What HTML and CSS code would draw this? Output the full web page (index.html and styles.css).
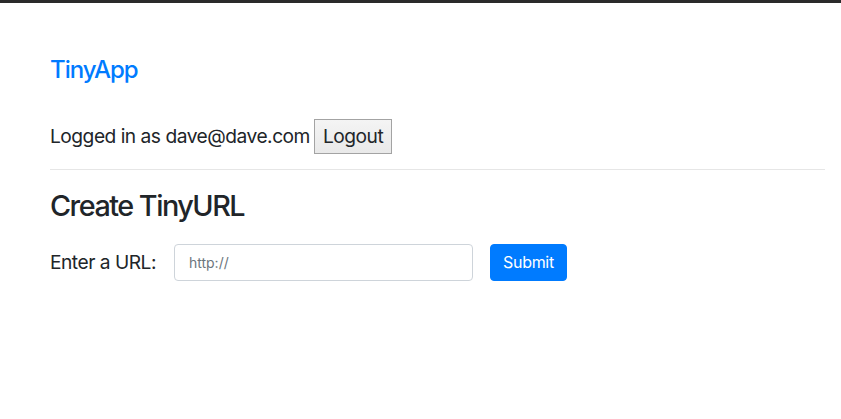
FILE: index.html
```html
<!DOCTYPE html>
<html lang="en">
<head>
<meta charset="utf-8">
<title>TinyApp</title>
<link rel="stylesheet" href="styles.css">
</head>
<body>
<div class="topbar"></div>
<div class="page">
  <nav class="nav">
    <a class="brand" href="#">TinyApp</a>
  </nav>
  <div class="login">
    <span class="login-text">Logged in as dave@dave.com</span>
    <button class="logout" type="button">Logout</button>
  </div>
  <hr class="rule">
  <main class="content">
    <h4 class="title">Create TinyURL</h4>
    <form class="url-form">
      <label class="url-label" for="longURL">Enter a URL:</label>
      <input class="url-input" id="longURL" type="text" placeholder="http://">
      <button class="submit" type="button">Submit</button>
    </form>
  </main>
</div>
</body>
</html>
```

FILE: styles.css
```css
html, body {
  margin: 0;
  padding: 0;
  background: #ffffff;
}

body {
  font-family: Inter, "Liberation Sans", Arial, sans-serif;
  font-size: 19.2px;
  line-height: 1.5;
  letter-spacing: -0.5px;
  color: #212529;
}

.topbar {
  height: 3px;
  background: #2a2a2a;
}

.page {
  padding: 0 16px 0 50px;
}

.nav {
  display: flex;
  padding-top: 49px;
  height: 36px;
}

.brand {
  font-size: 24px;
  line-height: 36px;
  font-weight: 500;
  letter-spacing: -1px;
  color: #007bff;
  text-decoration: none;
}

.login {
  display: flex;
  align-items: center;
  gap: 4px;
  margin-top: 31px;
  height: 35px;
}

.logout {
  font-family: inherit;
  font-size: 19.2px;
  line-height: 28.8px;
  letter-spacing: -0.5px;
  color: #212529;
  background: linear-gradient(#f4f4f4, #e9e9e9);
  border: 1px solid #a3a3a3;
  border-radius: 0;
  padding: 2px 8px;
  margin: 0;
}

.rule {
  margin: 15px 0 0 0;
  border: 0;
  border-top: 1px solid #e6e6e6;
  height: 0;
}

.title {
  margin: 19px 0 0 0;
  font-size: 28.8px;
  line-height: 34.56px;
  font-weight: 500;
  letter-spacing: -1.5px;
}

.url-form {
  display: flex;
  align-items: center;
  margin-top: 20px;
}

.url-label {
  margin-right: 18px;
}

.url-input {
  box-sizing: border-box;
  width: 299px;
  height: 37px;
  padding: 4px 14px;
  font-family: inherit;
  font-size: 14px;
  letter-spacing: 0;
  color: #495057;
  border: 1px solid #ced4da;
  border-radius: 4px;
  margin: 0 17px 0 0;
}

.url-input::placeholder {
  color: #6c757d;
}

.submit {
  box-sizing: border-box;
  height: 37px;
  width: 77px;
  font-family: inherit;
  font-size: 16px;
  letter-spacing: -0.3px;
  color: #ffffff;
  background: #007bff;
  border: 1px solid #007bff;
  border-radius: 4px;
  padding: 0;
}
```
